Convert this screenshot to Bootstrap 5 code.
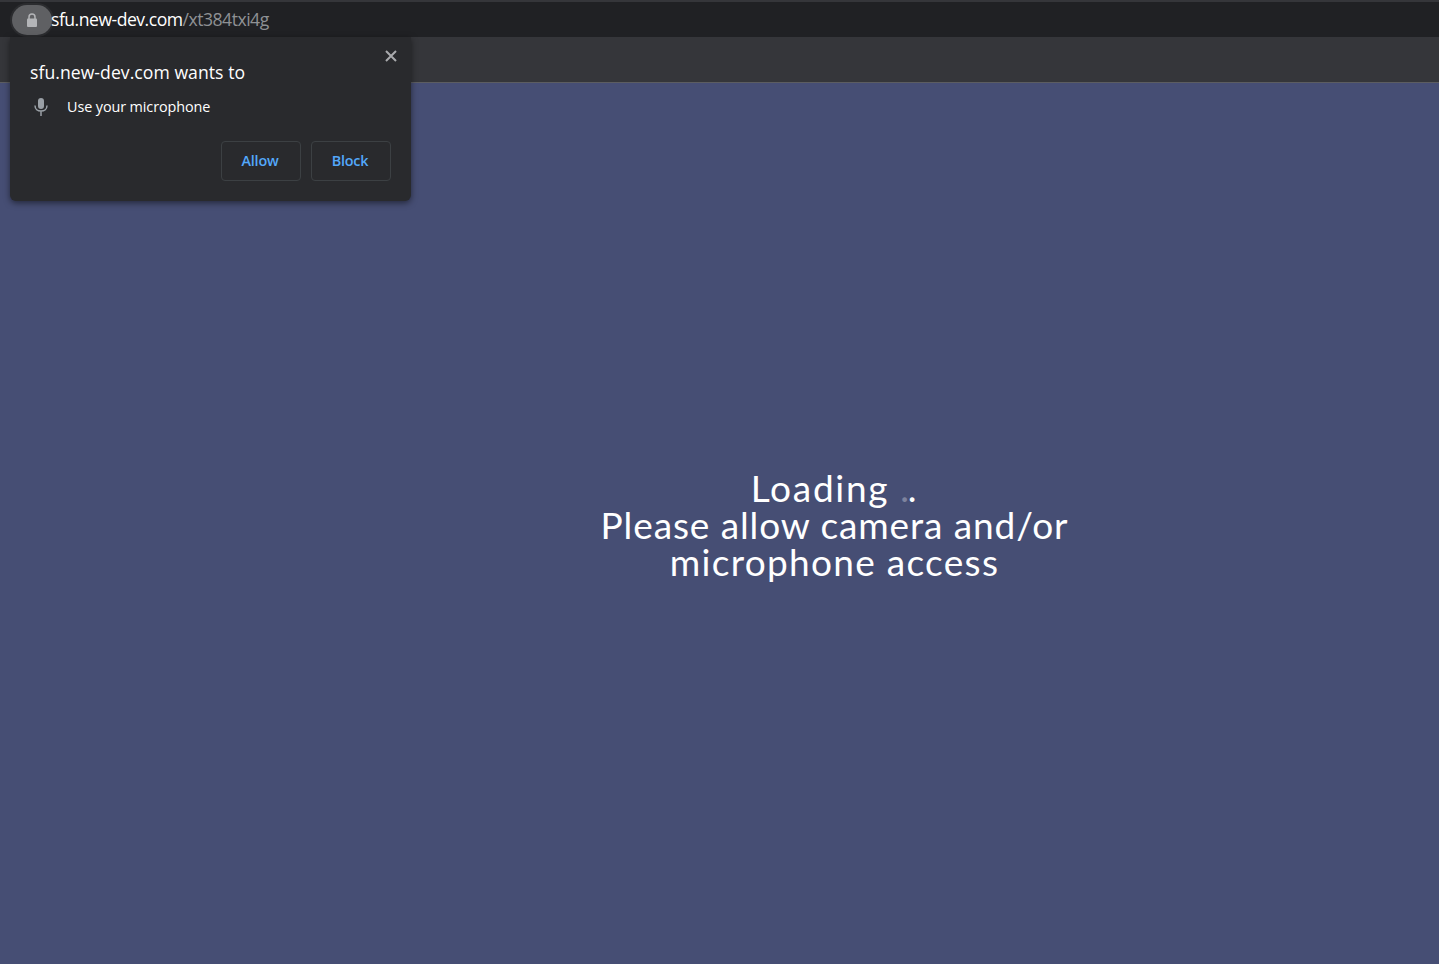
<!DOCTYPE html>
<html lang="en">
<head>
<meta charset="utf-8">
<title>sfu.new-dev.com</title>
<link href="https://cdn.jsdelivr.net/npm/bootstrap@5.3.0/dist/css/bootstrap.min.css" rel="stylesheet">
<style>
html,body{height:100%;margin:0}
body{background:#464e74;font-family:"Open Sans","Noto Sans",sans-serif;overflow:hidden}
.shell{height:964px}
.addr-strip{height:37px;background:#202124;border-top:2px solid #35363a;padding-left:12px}
.lock-pill{width:40px;height:30px;border-radius:15px;background:#5f6063;box-shadow:0 0 0 2px #2b2c2f}
.url-text{font-size:17.6px;letter-spacing:-.5px;margin-left:-1px;color:#fff;font-family:"Open Sans",sans-serif}
.url-path{color:#8f9194}
.tool-strip{height:46px;background:#35363a;border-bottom:1px solid #5c5d61}
.stage{padding-left:230px;padding-top:2px;color:#fff}
.load-text{width:500px;font-family:"Lato",sans-serif;font-weight:400;font-size:37px;line-height:37px;letter-spacing:.9px;text-align:center}
.load-first{letter-spacing:1.7px}
.load-last{letter-spacing:1.3px}
.dim-dot{opacity:.3;margin-right:-3px}
.perm-pop{position:absolute;left:10px;top:37px;width:401px;height:164px;background:#292a2d;border-radius:0 0 6px 6px;box-shadow:0 2px 6px rgba(0,0,0,.5);padding:23px 20px 0 20px;color:#fff}
.perm-title{font-size:17.6px;letter-spacing:.05px;line-height:24px}
.perm-row{margin-top:11px;height:24px;font-size:14.4px;letter-spacing:-.1px}
.perm-mic{width:22px;margin-right:15px}
.perm-close{position:absolute;right:13px;top:12px;width:14px;height:14px}
.perm-actions{margin-top:22px;column-gap:10px}
.perm-btn{width:80px;height:40px;padding:0 2px 0 0;border:1px solid #3c4043;border-radius:4px;background:transparent;color:#53a8fb;font-size:14.4px;font-weight:600;letter-spacing:-.2px}
.perm-btn:hover{background:#2f3034;color:#53a8fb;border-color:#3c4043}
</style>
</head>
<body>
<div class="shell d-flex flex-column">
  <div class="addr-strip d-flex align-items-center">
    <div class="lock-pill d-flex align-items-center justify-content-center flex-shrink-0">
      <svg width="12" height="14" viewBox="0 0 12 14" aria-hidden="true"><path d="M3 6V4a3 3 0 0 1 6 0v2" fill="none" stroke="#b4b5b8" stroke-width="1.5"/><rect x="1" y="5.5" width="10" height="8.5" rx="1" fill="#b4b5b8"/></svg>
    </div>
    <div class="url-text">sfu.new-dev.com<span class="url-path">/xt384txi4g</span></div>
  </div>
  <div class="tool-strip"></div>
  <div class="stage flex-grow-1 d-flex align-items-center justify-content-center">
    <div class="load-text">
      <div class="load-first">Loading <span class="dim-dot">.</span>.</div>
      <div>Please allow camera and/or</div>
      <div class="load-last">microphone access</div>
    </div>
  </div>
</div>
<div class="perm-pop">
  <svg class="perm-close" viewBox="0 0 14 14" aria-hidden="true"><path d="M2 2l10 10M12 2L2 12" stroke="#a9aaad" stroke-width="2" fill="none"/></svg>
  <div class="perm-title">sfu.new-dev.com wants to</div>
  <div class="perm-row d-flex align-items-center">
    <svg class="perm-mic" width="22" height="20" viewBox="0 0 22 20" aria-hidden="true"><rect x="8" y="1" width="6" height="11" rx="3" fill="#9aa0a6"/><path d="M5 8.5c0 3.4 2.6 5.6 6 5.6s6-2.2 6-5.6M11 14v5" fill="none" stroke="#9aa0a6" stroke-width="1.5"/></svg>
    <span>Use your microphone</span>
  </div>
  <div class="perm-actions d-flex justify-content-end">
    <button type="button" class="btn perm-btn">Allow</button>
    <button type="button" class="btn perm-btn">Block</button>
  </div>
</div>
</body>
</html>
